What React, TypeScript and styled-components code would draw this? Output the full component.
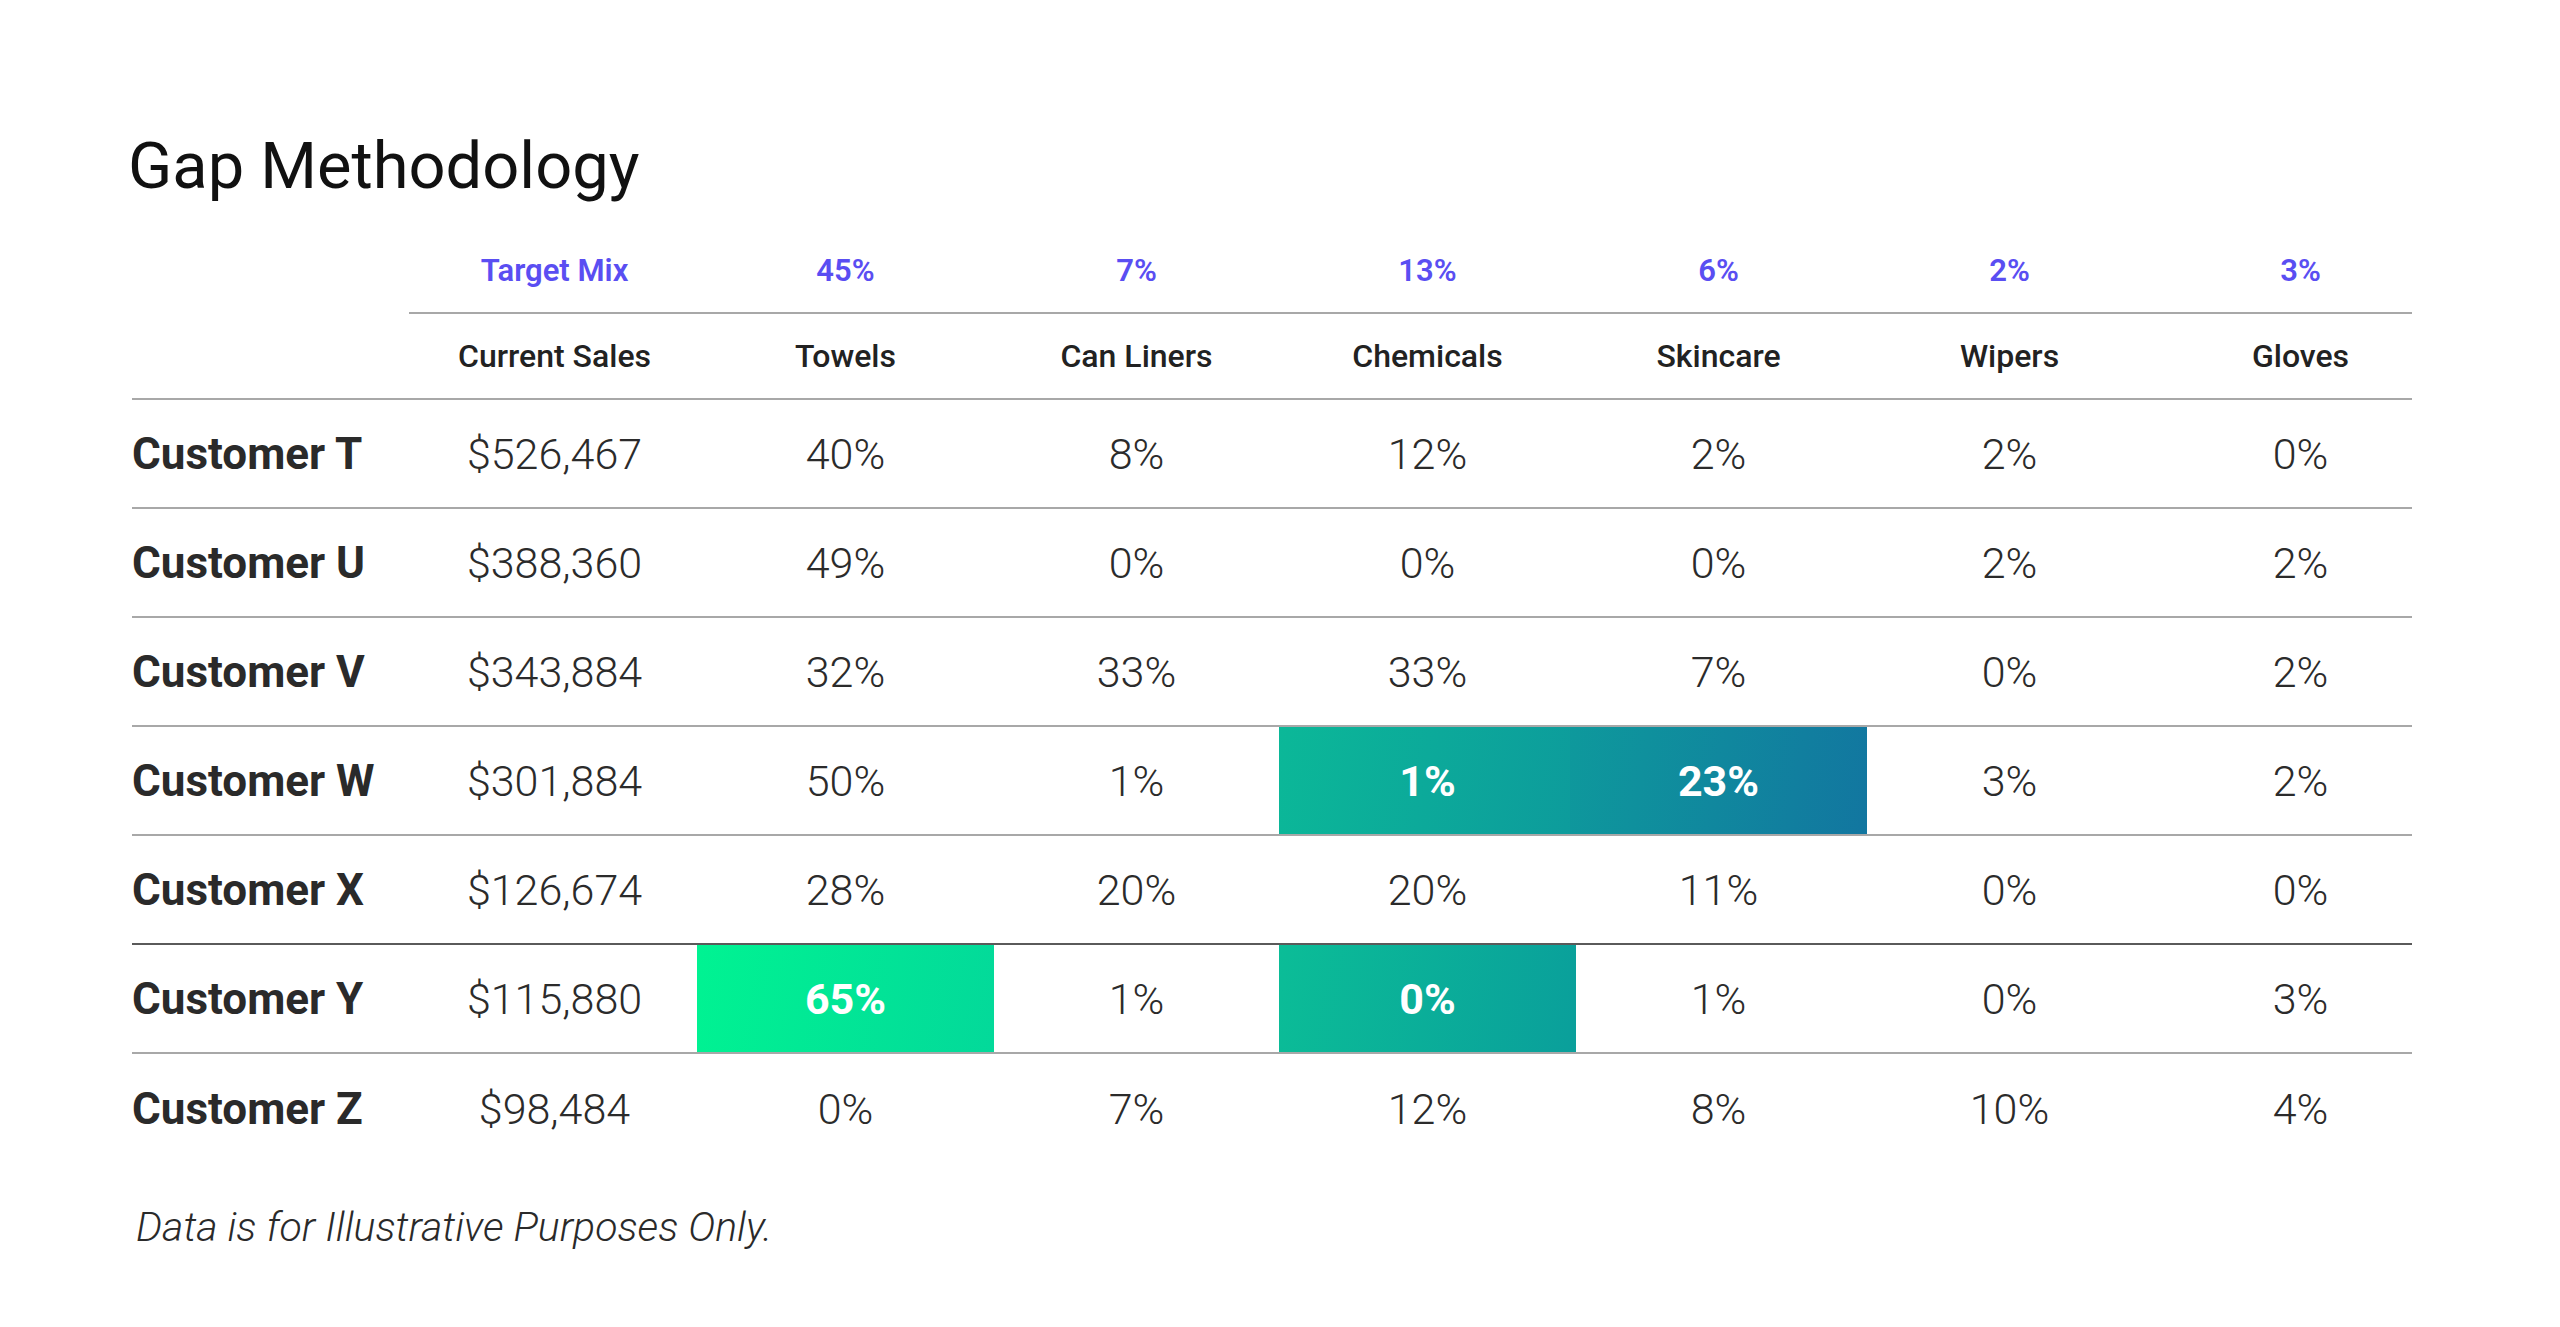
import styled, { createGlobalStyle } from 'styled-components';

const GlobalStyle = createGlobalStyle`
  html, body {
    margin: 0;
    padding: 0;
    background: #ffffff;
  }
  body {
    font-family: Roboto, 'Noto Sans', 'Liberation Sans', sans-serif;
    color: #2a2a2a;
  }
`;

const Page = styled.div`
  width: 2560px;
  min-height: 1327px;
  box-sizing: border-box;
  padding: 129px 0 0 132px;
`;

const Title = styled.h1`
  margin: 0 0 26px -4px;
  font-size: 65px;
  line-height: 74px;
  height: 74px;
  font-weight: 400;
  color: #111111;
`;

const TargetRow = styled.div`
  margin-left: 277px;
  width: 2003px;
  height: 85px;
  box-sizing: border-box;
  border-bottom: 2px solid #a8a8a8;
  display: grid;
  grid-template-columns: repeat(7, 291px);
  align-items: center;
`;

const TargetCell = styled.div`
  text-align: center;
  font-size: 31px;
  font-weight: 600;
  color: #5a4ef2;
`;

const Row = styled.div<{ $height: number; $line?: string }>`
  width: 2280px;
  height: ${({ $height }) => $height}px;
  box-sizing: border-box;
  border-bottom: ${({ $line }) => ($line ? `2px solid ${$line}` : 'none')};
  display: grid;
  grid-template-columns: 277px repeat(7, 291px);
`;

const HeadCell = styled.div`
  display: flex;
  align-items: center;
  justify-content: center;
  font-size: 32px;
  font-weight: 500;
  color: #222222;
`;

const Label = styled.div`
  display: flex;
  align-items: center;
  font-size: 44px;
  font-weight: 700;
  color: #2a2a2a;
`;

const Cell = styled.div<{ $fill?: string }>`
  display: flex;
  align-items: center;
  justify-content: center;
  font-size: 43px;
  font-weight: ${({ $fill }) => ($fill ? 700 : 300)};
  color: ${({ $fill }) => ($fill ? '#ffffff' : '#2b2b2b')};
  background: ${({ $fill }) => $fill || 'transparent'};
  margin: ${({ $fill }) => ($fill ? '0 -3px' : '0')};
`;

const Note = styled.p`
  margin: 43px 0 0 4px;
  font-size: 41px;
  line-height: 42px;
  font-style: italic;
  font-weight: 300;
  color: #2a2a2a;
`;

const fills = {
  green: 'linear-gradient(100deg, #00f392 0%, #03d99a 100%)',
  tealY: 'linear-gradient(100deg, #0bbd97 0%, #0a9f9b 100%)',
  tealW: 'linear-gradient(100deg, #0bb898 0%, #0d9b9c 100%)',
  blueW: 'linear-gradient(100deg, #0e999c 0%, #1276a0 100%)',
};

const targets = ['Target Mix', '45%', '7%', '13%', '6%', '2%', '3%'];
const headers = ['Current Sales', 'Towels', 'Can Liners', 'Chemicals', 'Skincare', 'Wipers', 'Gloves'];

type Row = { name: string; sales: string; values: string[]; fills?: (string | undefined)[] };

const rows: Row[] = [
  { name: 'Customer T', sales: '$526,467', values: ['40%', '8%', '12%', '2%', '2%', '0%'] },
  { name: 'Customer U', sales: '$388,360', values: ['49%', '0%', '0%', '0%', '2%', '2%'] },
  { name: 'Customer V', sales: '$343,884', values: ['32%', '33%', '33%', '7%', '0%', '2%'] },
  {
    name: 'Customer W',
    sales: '$301,884',
    values: ['50%', '1%', '1%', '23%', '3%', '2%'],
    fills: [undefined, undefined, fills.tealW, fills.blueW],
  },
  { name: 'Customer X', sales: '$126,674', values: ['28%', '20%', '20%', '11%', '0%', '0%'] },
  {
    name: 'Customer Y',
    sales: '$115,880',
    values: ['65%', '1%', '0%', '1%', '0%', '3%'],
    fills: [fills.green, undefined, fills.tealY],
  },
  { name: 'Customer Z', sales: '$98,484', values: ['0%', '7%', '12%', '8%', '10%', '4%'] },
];

export default function App() {
  return (
    <>
      <GlobalStyle />
      <Page>
        <Title>Gap Methodology</Title>

        <TargetRow>
          {targets.map((t) => (
            <TargetCell key={t}>{t}</TargetCell>
          ))}
        </TargetRow>

        <Row $height={86} $line="#a8a8a8">
          <div />
          {headers.map((h) => (
            <HeadCell key={h}>{h}</HeadCell>
          ))}
        </Row>

        {rows.map((row, i) => (
          <Row
            key={row.name}
            $height={109}
            $line={i === rows.length - 1 ? undefined : i === 4 ? '#5a5a5a' : '#a8a8a8'}
          >
            <Label>{row.name}</Label>
            <Cell>{row.sales}</Cell>
            {row.values.map((v, j) => (
              <Cell key={j} $fill={row.fills?.[j]}>
                {v}
              </Cell>
            ))}
          </Row>
        ))}

        <Note>Data is for Illustrative Purposes Only.</Note>
      </Page>
    </>
  );
}
